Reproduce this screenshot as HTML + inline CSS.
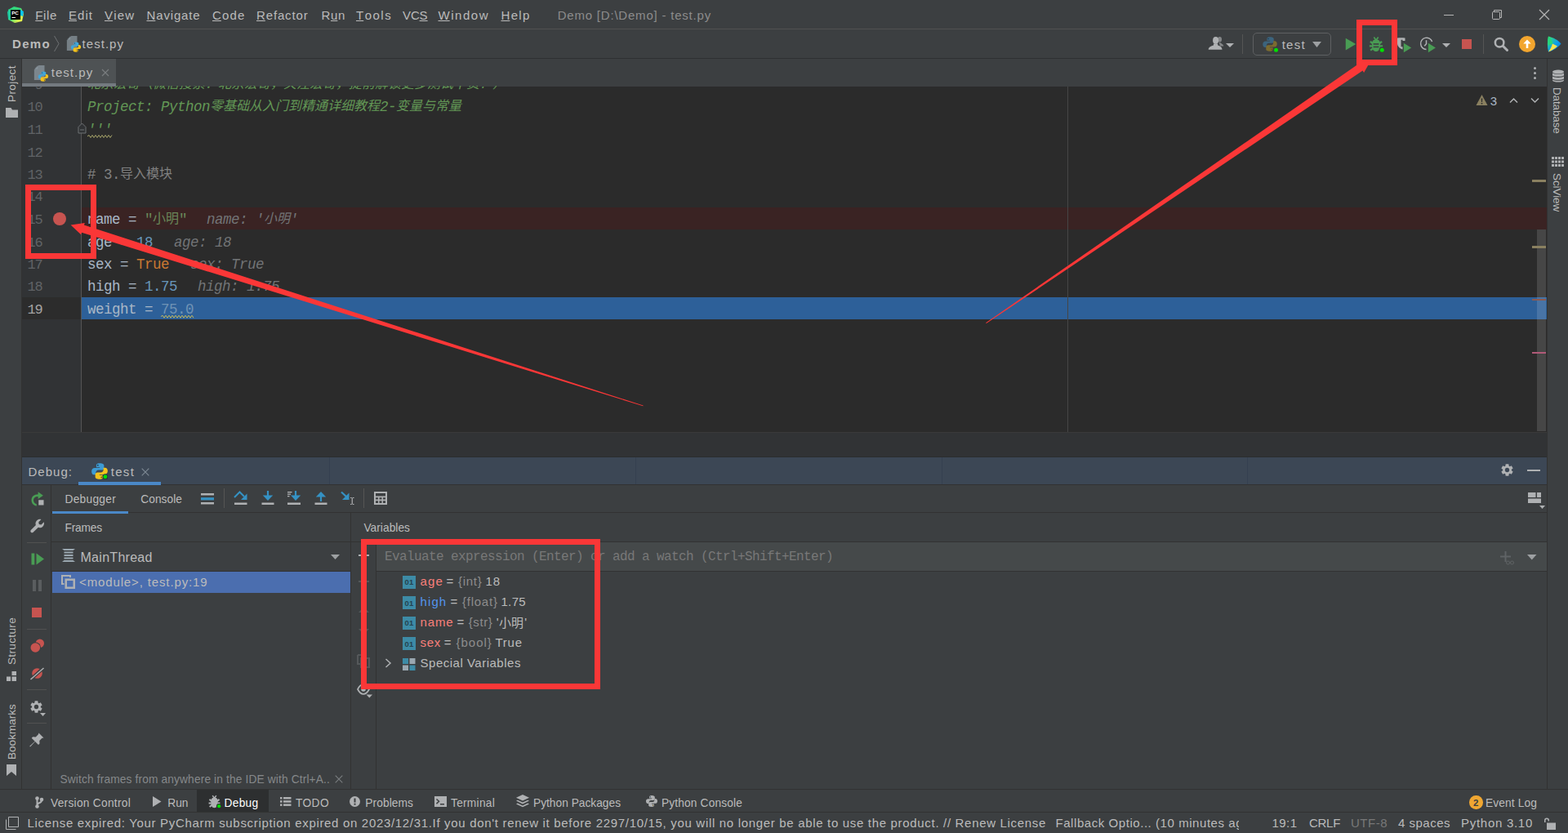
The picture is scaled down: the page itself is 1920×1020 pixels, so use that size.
<!DOCTYPE html>
<html><head><meta charset="utf-8"><title>Demo - test.py</title><style>html,body{margin:0;padding:0}
body{width:1920px;height:1020px;overflow:hidden;background:#3c3f41;position:relative;font-family:"Liberation Sans",sans-serif}
div,span,svg{position:absolute;display:block}
span{white-space:pre}
u{text-decoration:underline;text-underline-offset:1px;text-decoration-thickness:1px}
</style></head><body>
<div style="left:0px;top:35px;width:1920px;height:1px;background:#515151;"></div>
<svg style="left:9px;top:8px;" width="20" height="20" viewBox="0 0 20 20"><defs><linearGradient id="pcg" x1="0" y1="0" x2="1" y2="1"><stop offset="0" stop-color="#21D789"/><stop offset=".45" stop-color="#3FD873"/><stop offset=".75" stop-color="#D4EE4F"/><stop offset="1" stop-color="#FCF84A"/></linearGradient></defs><path d="M1 4L8 0l9 2 3 7-2 9-9 2-8-4z" fill="url(#pcg)"/><path d="M14 3l6 3-1 6-5-2z" fill="#07C3F2"/><path d="M0 7l2-4 3 14-4-2z" fill="#1FC9A0"/><rect x="4" y="4" width="12" height="12" fill="#000"/><rect x="5.5" y="13" width="4.5" height="1" fill="#fff"/><text x="5.2" y="10.3" font-family="Liberation Sans,sans-serif" font-weight="700" font-size="6.2" fill="#fff">PC</text></svg>
<span style="left:43.30px;top:9px;font-size:15px;line-height:20px;color:#bbbbbb;letter-spacing:0.582px;"><u style="letter-spacing:0;margin-right:0.582px">F</u>ile</span>
<span style="left:84.00px;top:9px;font-size:15px;line-height:20px;color:#bbbbbb;letter-spacing:1.035px;"><u style="letter-spacing:0;margin-right:1.035px">E</u>dit</span>
<span style="left:128.00px;top:9px;font-size:15px;line-height:20px;color:#bbbbbb;letter-spacing:1.188px;"><u style="letter-spacing:0;margin-right:1.188px">V</u>iew</span>
<span style="left:179.50px;top:9px;font-size:15px;line-height:20px;color:#bbbbbb;letter-spacing:0.850px;"><u style="letter-spacing:0;margin-right:0.850px">N</u>avigate</span>
<span style="left:260.00px;top:9px;font-size:15px;line-height:20px;color:#bbbbbb;letter-spacing:1.160px;"><u style="letter-spacing:0;margin-right:1.160px">C</u>ode</span>
<span style="left:314.00px;top:9px;font-size:15px;line-height:20px;color:#bbbbbb;letter-spacing:0.850px;"><u style="letter-spacing:0;margin-right:0.850px">R</u>efactor</span>
<span style="left:393.50px;top:9px;font-size:15px;line-height:20px;color:#bbbbbb;letter-spacing:0.656px;">R<u style="letter-spacing:0;margin-right:0.656px">u</u>n</span>
<span style="left:436.00px;top:9px;font-size:15px;line-height:20px;color:#bbbbbb;letter-spacing:1.494px;"><u style="letter-spacing:0;margin-right:1.494px">T</u>ools</span>
<span style="left:493.00px;top:9px;font-size:15px;line-height:20px;color:#bbbbbb;letter-spacing:-0.115px;">VC<u style="letter-spacing:0;margin-right:-0.115px">S</u></span>
<span style="left:536.50px;top:9px;font-size:15px;line-height:20px;color:#bbbbbb;letter-spacing:1.523px;"><u style="letter-spacing:0;margin-right:1.523px">W</u>indow</span>
<span style="left:613.50px;top:9px;font-size:15px;line-height:20px;color:#bbbbbb;letter-spacing:1.335px;"><u style="letter-spacing:0;margin-right:1.335px">H</u>elp</span>
<span style="left:682.70px;top:9px;font-size:15px;line-height:20px;color:#8c8c8c;letter-spacing:0.795px;">Demo [D:\Demo] - test.py</span>
<div style="left:1768px;top:18px;width:12px;height:1px;background:#b5b5b5;"></div>
<svg style="left:1826px;top:11px;" width="14" height="14" viewBox="0 0 14 14"><path d="M3.5 3.5v-2h9v9h-2" fill="none" stroke="#b5b5b5"/><rect x="1.5" y="3.5" width="9" height="9" fill="none" stroke="#b5b5b5" rx="1"/></svg>
<svg style="left:1884px;top:11px;" width="14" height="14" viewBox="0 0 14 14"><path d="M1 1l12 12M13 1L1 13" stroke="#b5b5b5" stroke-width="1.2"/></svg>
<div style="left:0px;top:71px;width:1920px;height:1px;background:#2e3032;"></div>
<span style="left:15.00px;top:44px;font-size:15px;line-height:20px;color:#bbbbbb;font-weight:700;letter-spacing:1.328px;">Demo</span>
<svg style="left:65px;top:43px;" width="9" height="21" viewBox="0 0 9 21"><path d="M1.5 1L7 10.5 1.5 20" fill="none" stroke="#6e7173" stroke-width="1"/></svg>
<svg style="left:80px;top:44px" width="20" height="20" viewBox="0 0 16 16"><path d="M5.8 0H11.6V14.4H1.5V4.3z" fill="#9AA7B0" opacity=".62"/><path d="M5 0L1.5 3.5H5z" fill="#9AA7B0" opacity=".45"/><g transform="translate(4.8,5.3) scale(.7)"><path d="M7.9 1C5.5 1 5.1 2 5.1 3v1.6h3v.6H3.6C2.3 5.2 1 6.1 1 8.1s1 3 2.3 3h1.4V9.3c0-1.3 1-2.3 2.3-2.3h2.9c1 0 1.9-.8 1.9-1.9V3c0-1-.9-2-3.9-2z" fill="#40A6DA"/><circle cx="6.4" cy="2.8" r=".65" fill="#1d3a52"/><path d="M8.1 15c2.4 0 2.8-1 2.8-2v-1.6h-3v-.6h4.5c1.3 0 2.6-.9 2.6-2.9s-1-3-2.3-3h-1.4v1.8c0 1.3-1 2.3-2.3 2.3H6.1c-1 0-1.9.8-1.9 1.9V13c0 1 .9 2 3.9 2z" fill="#F4C21C"/><circle cx="9.6" cy="13.2" r=".65" fill="#6b5310"/></g></svg>
<span style="left:100.60px;top:44px;font-size:15px;line-height:20px;color:#bbbbbb;letter-spacing:1.030px;">test.py</span>
<svg style="left:1478px;top:44px;" width="22" height="20" viewBox="0 0 22 20"><g fill="#AFB1B3"><g opacity=".62"><ellipse cx="15.5" cy="4.2" rx="2.5" ry="3.2"/><path d="M14.5 7.5C17 9 20.3 10 20.3 12.6H16z"/></g><ellipse cx="10.6" cy="5.5" rx="3.5" ry="4.4"/><path d="M1.7 16.8C1.7 13.5 5 12.3 8 11.4V9.5H13.2V11.4C16 12.3 18.5 13.5 18.5 16.8z"/></g></svg>
<svg style="left:1501px;top:53px;" width="10" height="5" viewBox="0 0 10 5"><path d="M0 0h10l-5 5z" fill="#AFB1B3"/></svg>
<div style="left:1521px;top:42px;width:1px;height:24px;background:#555555;"></div>
<div style="left:1534px;top:40px;width:94px;height:26px;border:1px solid #5e6062;border-radius:5px"></div>
<svg style="left:1545px;top:44px" width="20" height="20" viewBox="0 0 16 16"><path d="M7.9 1C5.5 1 5.1 2 5.1 3v1.6h3v.6H3.6C2.3 5.2 1 6.1 1 8.1s1 3 2.3 3h1.4V9.3c0-1.3 1-2.3 2.3-2.3h2.9c1 0 1.9-.8 1.9-1.9V3c0-1-.9-2-3.9-2z" fill="#3C647D"/><circle cx="6.4" cy="2.8" r=".65" fill="#1d3a52"/><path d="M8.1 15c2.4 0 2.8-1 2.8-2v-1.6h-3v-.6h4.5c1.3 0 2.6-.9 2.6-2.9s-1-3-2.3-3h-1.4v1.8c0 1.3-1 2.3-2.3 2.3H6.1c-1 0-1.9.8-1.9 1.9V13c0 1 .9 2 3.9 2z" fill="#7B6B2F"/><circle cx="9.6" cy="13.2" r=".65" fill="#6b5310"/><circle cx="14" cy="13.8" r="3" fill="#3c3f41"/><circle cx="14" cy="13.8" r="2" fill="#00E000"/></svg>
<span style="left:1569.70px;top:45px;font-size:15px;line-height:20px;color:#bbbbbb;letter-spacing:1.228px;">test</span>
<svg style="left:1607px;top:51px;" width="11" height="7" viewBox="0 0 11 7"><path d="M0 0h11l-5.5 7z" fill="#9da0a2"/></svg>
<svg style="left:1644px;top:44px" width="20" height="20" viewBox="0 0 16 16"><path d="M3 2.1L13 8 3 13.9z" fill="#499C54"/></svg>
<svg style="left:1675.3px;top:44px" width="20" height="20" viewBox="0 0 16 16"><g fill="#499C54"><path d="M8 3.4c2.6 0 4 1.7 4 4.3v2.5c0 2.8-1.6 5-4 5s-4-2.2-4-5V7.7c0-2.6 1.4-4.3 4-4.3z"/><path d="M5.3 1.5l1.1-.8L8 2.9 9.6.7l1.1.8-1.9 2.7H7.2z"/></g><g stroke="#499C54" stroke-width="1.9" fill="none"><path d="M4.8 7.4L2.3 5.5M11.2 7.4l2.5-1.9M4.2 9.9H1.5M11.8 9.9h2.7M4.8 12.3l-2.3 1.8M11.2 12.3l2.3 1.8"/></g><g fill="#3c3f41"><rect x="5.3" y="7.3" width="5.4" height="1.3"/><rect x="5.3" y="10.1" width="5.4" height="1.3"/></g><circle cx="13.85" cy="13.85" r="3" fill="#3c3f41"/><circle cx="13.85" cy="13.85" r="2" fill="#00E000"/></svg>
<svg style="left:1710px;top:45px;" width="20" height="20" viewBox="0 0 20 20"><path d="M1 1.5c3.5-.5 6-.5 9.5 0V5H7.5V3.8H5.5v8.4h2v3.3C3.5 14 1 11.5 1 8z" fill="#AFB1B3"/><path d="M8.8 7.8l9.4 5.7-9.4 5.7z" fill="#499C54"/></svg>
<svg style="left:1738px;top:45px;" width="20" height="20" viewBox="0 0 20 20"><path d="M15.6 6A7.2 7.2 0 1 0 8.5 15.6" fill="none" stroke="#AFB1B3" stroke-width="1.5"/><path d="M8.5 4.2v4.5l-2.3 2.5" fill="none" stroke="#AFB1B3" stroke-width="1.5"/><path d="M10.9 7.8l9 5.7-9 5.7z" fill="#499C54"/></svg>
<svg style="left:1766px;top:53px;" width="10" height="5" viewBox="0 0 10 5"><path d="M0 0h10l-5 5z" fill="#AFB1B3"/></svg>
<div style="left:1790px;top:48px;width:12px;height:12px;background:#C75450;"></div>
<div style="left:1816px;top:42px;width:1px;height:24px;background:#555555;"></div>
<svg style="left:1828px;top:44px" width="20" height="20" viewBox="0 0 16 16"><circle cx="6.5" cy="6.5" r="4.2" fill="none" stroke="#AFB1B3" stroke-width="2"/><path d="M9.8 9.8L14 14" stroke="#AFB1B3" stroke-width="2.4" stroke-linecap="round"/></svg>
<svg style="left:1860px;top:44px;" width="20" height="20" viewBox="0 0 20 20"><circle cx="10" cy="10" r="10" fill="#F2A52E"/><path d="M10 4.5L5.3 9.5h3.4V15h2.6V9.5h3.4z" fill="#fff"/></svg>
<svg style="left:1893px;top:43px;" width="20" height="22" viewBox="0 0 20 22"><defs><linearGradient id="cwm" x1="0" y1="0" x2="1" y2="1"><stop offset="0" stop-color="#3BEA62"/><stop offset=".55" stop-color="#0E9EEA"/><stop offset="1" stop-color="#0870D8"/></linearGradient></defs><path d="M3 1.5C9 3 15 6 18.5 10.5 15 15 9 19 3 20.5 1.5 14 1.5 8 3 1.5z" fill="url(#cwm)"/><path d="M3 20.5c4-1.5 8-4 11-7l-6-3c-1 4-3 7-5 10z" fill="#F9E34B"/><path d="M3 1.5c3 3 5 6 5.5 9l-6 2c-.5-4-.3-8 .5-11z" fill="#27D57A"/></svg>
<div style="left:26px;top:72px;width:1px;height:895px;background:#323232;"></div>
<div style="left:1894px;top:72px;width:1px;height:895px;background:#323232;"></div>
<span style="left:-0.50px;top:-14px;font-size:13.5px;line-height:20px;color:#bbbbbb;letter-spacing:0.410px;left:5px;top:124.5px;transform-origin:0 0;transform:rotate(-90deg);">Project</span>
<svg style="left:7px;top:132px;" width="15" height="12" viewBox="0 0 15 12"><path d="M0 0h6.5l1.5 2.5H15V12H0z" fill="#AFB1B3"/></svg>
<span style="left:-0.50px;top:-14px;font-size:13.5px;line-height:20px;color:#bbbbbb;letter-spacing:0.369px;left:5px;top:814px;transform-origin:0 0;transform:rotate(-90deg);">Structure</span>
<svg style="left:8px;top:822px;" width="12" height="12" viewBox="0 0 12 12"><g fill="#AFB1B3"><rect x="6.5" y="0" width="5.5" height="5"/><rect x="0" y="6.5" width="5" height="5.5"/><rect x="6.5" y="6.5" width="5.5" height="5.5"/></g></svg>
<span style="left:-0.50px;top:-14px;font-size:13.5px;line-height:20px;color:#bbbbbb;letter-spacing:0.041px;left:5px;top:929.5px;transform-origin:0 0;transform:rotate(-90deg);">Bookmarks</span>
<svg style="left:8px;top:936px;" width="12" height="14" viewBox="0 0 12 14"><path d="M0 0h12v14l-6-5-6 5z" fill="#AFB1B3"/></svg>
<svg style="left:1900px;top:85px;" width="16" height="16" viewBox="0 0 16 16"><g fill="#AFB1B3"><ellipse cx="8" cy="3" rx="7" ry="2.6"/><path d="M1 4.6c1.5 1.8 12.5 1.8 14 0v2.8c-1.5 1.8-12.5 1.8-14 0zM1 8.6c1.5 1.8 12.5 1.8 14 0v2.8c-1.5 1.8-12.5 1.8-14 0zM1 12.4c1.5 1.8 12.5 1.8 14 0v.8c0 3.2-14 3.2-14 0z"/></g></svg>
<span style="left:-0.50px;top:-14px;font-size:13.5px;line-height:20px;color:#bbbbbb;letter-spacing:-0.150px;left:1915.5px;top:106.5px;transform-origin:0 0;transform:rotate(90deg);">Database</span>
<svg style="left:1900px;top:192px;" width="15" height="12" viewBox="0 0 15 12"><g fill="#AFB1B3"><rect x="0" y="0" width="3" height="3"/><rect x="4" y="0" width="3" height="3"/><rect x="8" y="0" width="3" height="3"/><rect x="12" y="0" width="3" height="3"/><rect x="0" y="4.5" width="3" height="3"/><rect x="4" y="4.5" width="3" height="3"/><rect x="8" y="4.5" width="3" height="3"/><rect x="12" y="4.5" width="3" height="3"/><rect x="0" y="9" width="3" height="3"/><rect x="4" y="9" width="3" height="3"/><rect x="8" y="9" width="3" height="3"/><rect x="12" y="9" width="3" height="3"/></g></svg>
<span style="left:-0.50px;top:-14px;font-size:13.5px;line-height:20px;color:#bbbbbb;letter-spacing:-0.083px;left:1915.5px;top:211.5px;transform-origin:0 0;transform:rotate(90deg);">SciView</span>
<div style="left:27px;top:106px;width:1867px;height:423px;background:#2b2b2b;"></div>
<div style="left:27px;top:106px;width:72px;height:423px;background:#313335;"></div>
<div style="left:100px;top:254px;width:1794px;height:27px;background:#3a2323;"></div>
<div style="left:100px;top:364px;width:1794px;height:27px;background:#2d6099;"></div>
<div style="left:27px;top:364px;width:72px;height:27px;background:#2c2c2c;"></div>
<div style="left:99px;top:106px;width:1px;height:423px;background:#555555;"></div>
<div style="left:1307px;top:106px;width:1px;height:423px;background:#464646;"></div>
<div style="left:27px;top:529px;width:1867px;height:1px;background:#3a3a3a;"></div>
<div style="left:27px;top:530px;width:1867px;height:30px;background:#313335;"></div>
<div style="left:27px;top:559px;width:1867px;height:1px;background:#2b2d2e;"></div>
<span style="left:42.50px;top:95px;font-size:17px;line-height:20px;color:#606366;font-family:'Liberation Mono', monospace;letter-spacing:-1.200px;">9</span>
<span style="left:33.50px;top:122px;font-size:17px;line-height:20px;color:#606366;font-family:'Liberation Mono', monospace;letter-spacing:-1.200px;">10</span>
<span style="left:33.50px;top:150px;font-size:17px;line-height:20px;color:#606366;font-family:'Liberation Mono', monospace;letter-spacing:-1.200px;">11</span>
<span style="left:33.50px;top:178px;font-size:17px;line-height:20px;color:#606366;font-family:'Liberation Mono', monospace;letter-spacing:-1.200px;">12</span>
<span style="left:33.50px;top:205px;font-size:17px;line-height:20px;color:#606366;font-family:'Liberation Mono', monospace;letter-spacing:-1.200px;">13</span>
<span style="left:33.50px;top:232px;font-size:17px;line-height:20px;color:#606366;font-family:'Liberation Mono', monospace;letter-spacing:-1.200px;">14</span>
<span style="left:33.50px;top:260px;font-size:17px;line-height:20px;color:#606366;font-family:'Liberation Mono', monospace;letter-spacing:-1.200px;">15</span>
<span style="left:33.50px;top:288px;font-size:17px;line-height:20px;color:#606366;font-family:'Liberation Mono', monospace;letter-spacing:-1.200px;">16</span>
<span style="left:33.50px;top:315px;font-size:17px;line-height:20px;color:#606366;font-family:'Liberation Mono', monospace;letter-spacing:-1.200px;">17</span>
<span style="left:33.50px;top:342px;font-size:17px;line-height:20px;color:#606366;font-family:'Liberation Mono', monospace;letter-spacing:-1.200px;">18</span>
<span style="left:33.50px;top:370px;font-size:17px;line-height:20px;color:#a4a3a3;font-family:'Liberation Mono', monospace;letter-spacing:-1.200px;">19</span>
<svg style="left:101px;top:88px" width="524" height="26" viewBox="-6 -20 524 26"><text x="0" y="0" font-size="16" font-style="italic" fill="#629755" font-family="'Liberation Mono', 'Noto Sans CJK SC', monospace">北京宏哥（微信搜索：北京宏哥，关注宏哥，提前解锁更多测试干货！）</text></svg>
<span style="left:107.00px;top:119px;font-size:17.5px;line-height:24px;color:#629755;font-family:'Liberation Mono', monospace;font-style:italic;letter-spacing:-0.500px;">Project: Python</span>
<svg style="left:251px;top:115px" width="220" height="26" viewBox="-6 -20 220 26"><text x="0" y="0" font-size="16" font-style="italic" fill="#629755" font-family="'Liberation Mono', 'Noto Sans CJK SC', monospace">零基础从入门到精通详细教程</text></svg>
<span style="left:465.00px;top:119px;font-size:17.5px;line-height:24px;color:#629755;font-family:'Liberation Mono', monospace;font-style:italic;letter-spacing:-0.500px;">2-</span>
<svg style="left:479px;top:115px" width="92" height="26" viewBox="-6 -20 92 26"><text x="0" y="0" font-size="16" font-style="italic" fill="#629755" font-family="'Liberation Mono', 'Noto Sans CJK SC', monospace">变量与常量</text></svg>
<span style="left:107.00px;top:147px;font-size:17.5px;line-height:24px;color:#629755;font-family:'Liberation Mono', monospace;font-style:italic;letter-spacing:-0.500px;">'''</span>
<svg style="left:0;top:0" width="1920" height="1020"><path d="M107 167.0L109 165.5L111 168.5L113 165.5L115 168.5L117 165.5L119 168.5L121 165.5L123 168.5L125 165.5L127 168.5L129 165.5L131 168.5L133 165.5L135 168.5L137 165.5" fill="none" stroke="#a8a56a" stroke-width="1"/></svg>
<svg style="left:94.5px;top:149.5px;" width="11" height="14" viewBox="0 0 11 14"><path d="M1 5.5L5.5 1 10 5.5V13H1z" fill="#313335" stroke="#6f7275" stroke-width="1"/><path d="M3 9h5" stroke="#6f7275"/></svg>
<span style="left:107.00px;top:202px;font-size:17.5px;line-height:24px;color:#808080;font-family:'Liberation Mono', monospace;letter-spacing:-0.500px;"># 3.</span>
<svg style="left:141px;top:198px" width="76" height="26" viewBox="-6 -20 76 26"><text x="0" y="0" font-size="16" fill="#808080" font-family="'Liberation Mono', 'Noto Sans CJK SC', monospace">导入模块</text></svg>
<span style="left:107.00px;top:257px;font-size:17.5px;line-height:24px;color:#a9b7c6;font-family:'Liberation Mono', monospace;letter-spacing:-0.500px;">name = </span>
<span style="left:177.00px;top:257px;font-size:17.5px;line-height:24px;color:#6a8759;font-family:'Liberation Mono', monospace;letter-spacing:-0.500px;">"</span>
<svg style="left:181px;top:253px" width="44" height="26" viewBox="-6 -20 44 26"><text x="0" y="0" font-size="16" fill="#6a8759" font-family="'Liberation Mono', 'Noto Sans CJK SC', monospace">小明</text></svg>
<span style="left:219.00px;top:257px;font-size:17.5px;line-height:24px;color:#6a8759;font-family:'Liberation Mono', monospace;letter-spacing:-0.500px;">"</span>
<span style="left:253.00px;top:257px;font-size:17.5px;line-height:24px;color:#727476;font-family:'Liberation Mono', monospace;font-style:italic;letter-spacing:-0.500px;">name: '</span>
<svg style="left:317px;top:253px" width="44" height="26" viewBox="-6 -20 44 26"><text x="0" y="0" font-size="16" font-style="italic" fill="#727476" font-family="'Liberation Mono', 'Noto Sans CJK SC', monospace">小明</text></svg>
<span style="left:355.00px;top:257px;font-size:17.5px;line-height:24px;color:#727476;font-family:'Liberation Mono', monospace;font-style:italic;letter-spacing:-0.500px;">'</span>
<span style="left:107.00px;top:285px;font-size:17.5px;line-height:24px;color:#a9b7c6;font-family:'Liberation Mono', monospace;letter-spacing:-0.500px;">age = </span>
<span style="left:167.00px;top:285px;font-size:17.5px;line-height:24px;color:#6897bb;font-family:'Liberation Mono', monospace;letter-spacing:-0.500px;">18</span>
<span style="left:213.00px;top:285px;font-size:17.5px;line-height:24px;color:#727476;font-family:'Liberation Mono', monospace;font-style:italic;letter-spacing:-0.500px;">age: 18</span>
<span style="left:107.00px;top:312px;font-size:17.5px;line-height:24px;color:#a9b7c6;font-family:'Liberation Mono', monospace;letter-spacing:-0.500px;">sex = </span>
<span style="left:167.00px;top:312px;font-size:17.5px;line-height:24px;color:#cc7832;font-family:'Liberation Mono', monospace;letter-spacing:-0.500px;">True</span>
<span style="left:233.00px;top:312px;font-size:17.5px;line-height:24px;color:#727476;font-family:'Liberation Mono', monospace;font-style:italic;letter-spacing:-0.500px;">sex: True</span>
<span style="left:107.00px;top:339px;font-size:17.5px;line-height:24px;color:#a9b7c6;font-family:'Liberation Mono', monospace;letter-spacing:-0.500px;">high = </span>
<span style="left:177.00px;top:339px;font-size:17.5px;line-height:24px;color:#6897bb;font-family:'Liberation Mono', monospace;letter-spacing:-0.500px;">1.75</span>
<span style="left:242.00px;top:339px;font-size:17.5px;line-height:24px;color:#727476;font-family:'Liberation Mono', monospace;font-style:italic;letter-spacing:-0.500px;">high: 1.75</span>
<span style="left:107.00px;top:367px;font-size:17.5px;line-height:24px;color:#a9b7c6;font-family:'Liberation Mono', monospace;letter-spacing:-0.500px;">weight = </span>
<span style="left:197.00px;top:367px;font-size:17.5px;line-height:24px;color:#6f93b5;font-family:'Liberation Mono', monospace;letter-spacing:-0.500px;">75.0</span>
<svg style="left:0;top:0" width="1920" height="1020"><path d="M197 387.7L199 386.2L201 389.2L203 386.2L205 389.2L207 386.2L209 389.2L211 386.2L213 389.2L215 386.2L217 389.2L219 386.2L221 389.2L223 386.2L225 389.2L227 386.2L229 389.2L231 386.2L233 389.2L235 386.2L237 389.2" fill="none" stroke="#c2b85e" stroke-width="1"/></svg>
<div style="left:64.6px;top:259.6px;width:16.2px;height:16.2px;border-radius:50%;background:#c75450"></div>
<svg style="left:1807px;top:115px;" width="15" height="15" viewBox="0 0 15 15"><path d="M7.5 1L14.5 14H.5z" fill="#8a8060"/><path d="M6.7 5.5h1.6l-.3 4.5h-1zM6.7 11h1.6v1.6H6.7z" fill="#2b2b2b"/></svg>
<span style="left:1824.70px;top:114px;font-size:15px;line-height:20px;color:#a9b7c6;letter-spacing:0.956px;">3</span>
<svg style="left:1848px;top:119px;" width="11" height="8" viewBox="0 0 11 8"><path d="M1 6.5L5.5 2 10 6.5" fill="none" stroke="#AFB1B3" stroke-width="1.5"/></svg>
<svg style="left:1874px;top:119px;" width="11" height="8" viewBox="0 0 11 8"><path d="M1 1.5L5.5 6 10 1.5" fill="none" stroke="#AFB1B3" stroke-width="1.5"/></svg>
<div style="left:1882px;top:281px;width:11px;height:247px;background:rgba(255,255,255,.13);"></div>
<div style="left:1876px;top:220px;width:17px;height:3px;background:#8a8060;"></div>
<div style="left:1876px;top:301px;width:17px;height:3px;background:#8a8060;"></div>
<div style="left:1876px;top:366px;width:17px;height:2px;background:#8c5a50;"></div>
<div style="left:1876px;top:431px;width:17px;height:2px;background:#b05a78;"></div>
<div style="left:27px;top:72px;width:1867px;height:33px;background:#3c3f41;"></div>
<div style="left:27px;top:72px;width:115px;height:30px;background:#4e5254;"></div>
<div style="left:27px;top:102px;width:115px;height:4px;background:#747a80;"></div>
<svg style="left:40px;top:80px" width="20" height="20" viewBox="0 0 16 16"><path d="M5.8 0H11.6V14.4H1.5V4.3z" fill="#9AA7B0" opacity=".62"/><path d="M5 0L1.5 3.5H5z" fill="#9AA7B0" opacity=".45"/><g transform="translate(4.8,5.3) scale(.7)"><path d="M7.9 1C5.5 1 5.1 2 5.1 3v1.6h3v.6H3.6C2.3 5.2 1 6.1 1 8.1s1 3 2.3 3h1.4V9.3c0-1.3 1-2.3 2.3-2.3h2.9c1 0 1.9-.8 1.9-1.9V3c0-1-.9-2-3.9-2z" fill="#40A6DA"/><circle cx="6.4" cy="2.8" r=".65" fill="#1d3a52"/><path d="M8.1 15c2.4 0 2.8-1 2.8-2v-1.6h-3v-.6h4.5c1.3 0 2.6-.9 2.6-2.9s-1-3-2.3-3h-1.4v1.8c0 1.3-1 2.3-2.3 2.3H6.1c-1 0-1.9.8-1.9 1.9V13c0 1 .9 2 3.9 2z" fill="#F4C21C"/><circle cx="9.6" cy="13.2" r=".65" fill="#6b5310"/></g></svg>
<span style="left:62.70px;top:79px;font-size:15px;line-height:20px;color:#bbbbbb;letter-spacing:1.045px;">test.py</span>
<svg style="left:124px;top:84px;" width="10" height="10" viewBox="0 0 10 10"><path d="M1 1l8 8M9 1L1 9" stroke="#7a7e80" stroke-width="1.1"/></svg>
<div style="left:1877.5px;top:82.0px;width:3px;height:3px;border-radius:50%;background:#AFB1B3"></div>
<div style="left:1877.5px;top:87.8px;width:3px;height:3px;border-radius:50%;background:#AFB1B3"></div>
<div style="left:1877.5px;top:93.5px;width:3px;height:3px;border-radius:50%;background:#AFB1B3"></div>
<div style="left:27px;top:560px;width:1867px;height:33px;background:#3c4755;"></div>
<div style="left:403px;top:560px;width:1px;height:33px;background:#354050;"></div>
<div style="left:778px;top:560px;width:1px;height:33px;background:#354050;"></div>
<div style="left:1153px;top:560px;width:1px;height:33px;background:#354050;"></div>
<div style="left:1527px;top:560px;width:1px;height:33px;background:#354050;"></div>
<div style="left:27px;top:593px;width:1867px;height:1px;background:#323232;"></div>
<span style="left:34.50px;top:568px;font-size:15px;line-height:20px;color:#bbbbbb;letter-spacing:1.004px;">Debug:</span>
<svg style="left:112px;top:567px" width="20" height="20" viewBox="0.9 0.9 14.2 14.2"><path d="M7.9 1C5.5 1 5.1 2 5.1 3v1.6h3v.6H3.6C2.3 5.2 1 6.1 1 8.1s1 3 2.3 3h1.4V9.3c0-1.3 1-2.3 2.3-2.3h2.9c1 0 1.9-.8 1.9-1.9V3c0-1-.9-2-3.9-2z" fill="#3E9BD3"/><circle cx="6.4" cy="2.8" r=".65" fill="#1d3a52"/><path d="M8.1 15c2.4 0 2.8-1 2.8-2v-1.6h-3v-.6h4.5c1.3 0 2.6-.9 2.6-2.9s-1-3-2.3-3h-1.4v1.8c0 1.3-1 2.3-2.3 2.3H6.1c-1 0-1.9.8-1.9 1.9V13c0 1 .9 2 3.9 2z" fill="#F4C21C"/><circle cx="9.6" cy="13.2" r=".65" fill="#6b5310"/><circle cx="12.9" cy="12.8" r="2.5" fill="#2b3440"/><circle cx="12.9" cy="12.8" r="1.75" fill="#00E000"/></svg>
<span style="left:135.75px;top:568px;font-size:15px;line-height:20px;color:#bbbbbb;letter-spacing:1.291px;">test</span>
<svg style="left:173px;top:573px;" width="10" height="10" viewBox="0 0 10 10"><path d="M.7 .7l8.6 8.6M9.3 .7L.7 9.3" stroke="#7f8b96" stroke-width="1.1"/></svg>
<div style="left:96px;top:590px;width:101px;height:4px;background:#4a88c7;"></div>
<svg style="left:1837px;top:567px;" width="17" height="17" viewBox="0 0 16 16"><path d="M6.01 3.30L6.27 1.22L9.73 1.22L9.99 3.30L11.08 3.93L13.01 3.11L14.74 6.11L13.06 7.37L13.06 8.63L14.74 9.89L13.01 12.89L11.08 12.07L9.99 12.70L9.73 14.78L6.27 14.78L6.01 12.70L4.92 12.07L2.99 12.89L1.26 9.89L2.94 8.63L2.94 7.37L1.26 6.11L2.99 3.11L4.92 3.93ZM8 5.5a2.5 2.5 0 1 0 0 5 2.5 2.5 0 0 0 0-5z" fill="#AFB1B3" fill-rule="evenodd"/></svg>
<div style="left:1870px;top:575px;width:16px;height:2px;background:#AFB1B3;"></div>
<div style="left:62px;top:594px;width:1px;height:373px;background:#323232;"></div>
<svg style="left:36px;top:601px" width="20" height="20" viewBox="0 0 16 16"><path d="M8.5 1l5 3.5-5 3.5V5.5C5.5 5.5 4 7 4 9.2c0 1.8 1.2 3.3 3 3.7v2C4 14.4 2 12 2 9.2 2 5.8 4.5 3.5 8.5 3.4z" fill="#499C54"/><rect x="9" y="9" width="5" height="5" fill="#AFB1B3"/></svg>
<svg style="left:36px;top:634px" width="20" height="20" viewBox="0 0 16 16"><path d="M14.2 4.2l-2.6 2.6-2.2-.4-.4-2.2 2.6-2.6c-1.6-.5-3.3-.1-4.4 1.1-1.2 1.2-1.5 2.9-.9 4.4L1.5 12c-.6.6-.6 1.6 0 2.2.6.6 1.6.6 2.2 0l5-4.8c1.5.6 3.2.3 4.4-.9 1.2-1.1 1.6-2.8 1.1-4.3z" fill="#AFB1B3"/></svg>
<div style="left:33px;top:664px;width:24px;height:1px;background:#515151;"></div>
<svg style="left:38px;top:677px;" width="17" height="15" viewBox="0 0 17 15"><rect x="0.5" y="0.5" width="3.8" height="14" fill="#499C54"/><path d="M6.5 0.5L16 7.5 6.5 14.5z" fill="#499C54"/></svg>
<div style="left:40px;top:710px;width:4px;height:14px;background:#5a5d5f;"></div>
<div style="left:46.5px;top:710px;width:4px;height:14px;background:#5a5d5f;"></div>
<div style="left:39px;top:744px;width:12px;height:12px;background:#c75450;"></div>
<div style="left:33px;top:770px;width:24px;height:1px;background:#515151;"></div>
<svg style="left:37px;top:782px;" width="18" height="18" viewBox="0 0 18 18"><circle cx="11.8" cy="5.8" r="5.2" fill="#c75450"/><circle cx="6.3" cy="11" r="6.8" fill="#3c3f41"/><circle cx="6.3" cy="11" r="5.8" fill="#c75450"/></svg>
<svg style="left:36px;top:815px;" width="19" height="19" viewBox="0 0 19 19"><circle cx="9.5" cy="9.5" r="6.3" fill="#c75450"/><path d="M1 17.5L17.5 2.5" stroke="#3c3f41" stroke-width="4"/><path d="M1.5 17L17.5 3" stroke="#AFB1B3" stroke-width="1.5"/></svg>
<div style="left:33px;top:844px;width:24px;height:1px;background:#515151;"></div>
<svg style="left:36px;top:856.5px;" width="17" height="17" viewBox="0 0 16 16"><path d="M6.01 3.30L6.27 1.22L9.73 1.22L9.99 3.30L11.08 3.93L13.01 3.11L14.74 6.11L13.06 7.37L13.06 8.63L14.74 9.89L13.01 12.89L11.08 12.07L9.99 12.70L9.73 14.78L6.27 14.78L6.01 12.70L4.92 12.07L2.99 12.89L1.26 9.89L2.94 8.63L2.94 7.37L1.26 6.11L2.99 3.11L4.92 3.93ZM8 5.5a2.5 2.5 0 1 0 0 5 2.5 2.5 0 0 0 0-5z" fill="#AFB1B3" fill-rule="evenodd"/></svg>
<svg style="left:49px;top:873px;" width="7" height="4" viewBox="0 0 7 4"><path d="M0 0h7l-3.5 4z" fill="#AFB1B3"/></svg>
<div style="left:33px;top:885px;width:24px;height:1px;background:#515151;"></div>
<svg style="left:35px;top:896px;" width="20" height="20" viewBox="0 0 20 20"><path d="M12.5 1.5l6 6-2 .3-3.2 3.2.2 3.5-1.5 1.5-4-4-6 6.5-.8-.8 6.5-6-4-4 1.5-1.5 3.5.2 3.2-3.2z" fill="#AFB1B3"/></svg>
<div style="left:63px;top:627px;width:1831px;height:1px;background:#323232;"></div>
<span style="left:79.50px;top:602px;font-size:13.75px;line-height:20px;color:#bbbbbb;letter-spacing:0.262px;">Debugger</span>
<span style="left:172.25px;top:602px;font-size:13.75px;line-height:20px;color:#bbbbbb;letter-spacing:0.042px;">Console</span>
<div style="left:64px;top:626px;width:93px;height:3px;background:#4a88c7;"></div>
<svg style="left:246px;top:603px;" width="16" height="15" viewBox="0 0 16 15"><rect x="0" y="1" width="16" height="2.5" fill="#AFB1B3"/><rect x="0" y="6.2" width="16" height="3.2" fill="#3592C4"/><rect x="0" y="12" width="16" height="2.5" fill="#AFB1B3"/></svg>
<div style="left:274px;top:598px;width:1px;height:24px;background:#555555;"></div>
<svg style="left:286px;top:600px;" width="18" height="19" viewBox="0 0 18 19"><path d="M1 9L7.5 2.5l5.5 5.5" fill="none" stroke="#3592C4" stroke-width="2"/><path d="M16.5 4.5v7.5H9z" fill="#3592C4"/><rect x="1" y="15.5" width="15.5" height="2.5" fill="#AFB1B3"/></svg>
<svg style="left:319px;top:600px;" width="18" height="19" viewBox="0 0 18 19"><path d="M9 1v10" stroke="#3592C4" stroke-width="2.2"/><path d="M2.8 6.5L9 13l6.2-6.5z" fill="#3592C4"/><rect x="1.5" y="15.5" width="15" height="2.5" fill="#AFB1B3"/></svg>
<svg style="left:351px;top:600px;" width="18" height="19" viewBox="0 0 18 19"><path d="M11 1v10" stroke="#3592C4" stroke-width="2.2"/><path d="M5 6.5L11 13l6.2-6.5z" fill="#3592C4"/><rect x="1" y="15.5" width="16" height="2.5" fill="#AFB1B3"/><rect x="1" y="2" width="5.5" height="1.3" fill="#AFB1B3"/><rect x="1" y="4.5" width="4" height="1.3" fill="#AFB1B3"/><rect x="1" y="7" width="2.5" height="1.3" fill="#AFB1B3"/></svg>
<svg style="left:384px;top:600px;" width="18" height="19" viewBox="0 0 18 19"><path d="M9 4v10" stroke="#3592C4" stroke-width="2.2"/><path d="M2.8 8.5L9 2l6.2 6.5z" fill="#3592C4"/><rect x="1.5" y="15.5" width="15" height="2.5" fill="#AFB1B3"/></svg>
<svg style="left:416px;top:600px;" width="19" height="19" viewBox="0 0 19 19"><path d="M2 2.5l7.5 7" stroke="#3592C4" stroke-width="2.2"/><path d="M11.5 3.5v8.5H3z" fill="#3592C4"/><path d="M13 9.5h1.5M16 9.5h1.5M15.25 9.5v8M13 17.5h1.5M16 17.5h1.5" stroke="#AFB1B3" stroke-width="1.2" fill="none"/></svg>
<div style="left:445px;top:598px;width:1px;height:24px;background:#555555;"></div>
<svg style="left:458px;top:602px;" width="16" height="16" viewBox="0 0 16 16"><path d="M0 0h16v16H0zM2 2v3.5h12V2zM2 7.2v2.3h3V7.2zM6.5 7.2v2.3h3V7.2zM11 7.2v2.3h3V7.2zM2 11.2v2.8h3v-2.8zM6.5 11.2v2.8h3v-2.8zM11 11.2v2.8h3v-2.8z" fill="#AFB1B3" fill-rule="evenodd"/></svg>
<svg style="left:1871px;top:603px;" width="17" height="13" viewBox="0 0 17 13"><g fill="#AFB1B3"><rect x="0" y="0" width="9.5" height="6"/><rect x="11" y="0" width="5" height="6"/><rect x="0" y="7.5" width="16" height="5.5"/></g></svg>
<svg style="left:1885px;top:619px;" width="7" height="4" viewBox="0 0 7 4"><path d="M0 0h7l-3.5 4z" fill="#AFB1B3"/></svg>
<div style="left:429px;top:628px;width:1px;height:339px;background:#323232;"></div>
<span style="left:79.50px;top:637px;font-size:13.75px;line-height:20px;color:#bbbbbb;letter-spacing:-0.202px;">Frames</span>
<span style="left:445.40px;top:637px;font-size:13.75px;line-height:20px;color:#bbbbbb;letter-spacing:0.032px;">Variables</span>
<div style="left:63px;top:663px;width:1831px;height:1px;background:#323232;"></div>
<svg style="left:76px;top:672px;" width="16" height="16" viewBox="0 0 16 16"><g fill="#9AA7B0"><path d="M0 0h16l-2.5 2h-11z"/><rect x="2.5" y="3.5" width="11" height="2"/><rect x="2.5" y="7" width="11" height="2"/><rect x="2.5" y="10.5" width="11" height="2"/><path d="M2.5 14h11l2.5 2H0z"/></g></svg>
<span style="left:98.50px;top:673px;font-size:16px;line-height:20px;color:#bbbbbb;letter-spacing:0.287px;">MainThread</span>
<svg style="left:405px;top:679px;" width="11" height="6" viewBox="0 0 11 6"><path d="M0 0h11l-5.5 6z" fill="#9da0a2"/></svg>
<div style="left:63px;top:699px;width:366px;height:1px;background:#323232;"></div>
<div style="left:64px;top:700px;width:365px;height:26px;background:#4b6eaf;"></div>
<svg style="left:75px;top:704px;" width="17" height="17" viewBox="0 0 17 17"><path d="M0 0h12v3h-2V2H2v8h1.5v2H0z" fill="#AFB1B3"/><path d="M4.5 4.5H17V17H4.5zM7 7v7.5h7.5V7z" fill="#AFB1B3" fill-rule="evenodd"/></svg>
<span style="left:97.00px;top:703px;font-size:15px;line-height:20px;color:#bbbbbb;letter-spacing:0.870px;">&lt;module&gt;, test.py:19</span>
<span style="left:73.50px;top:945px;font-size:13.75px;line-height:20px;color:#85888a;letter-spacing:0.132px;">Switch frames from anywhere in the IDE with Ctrl+A..</span>
<svg style="left:410px;top:949px;" width="10" height="10" viewBox="0 0 10 10"><path d="M.7 .7l8.6 8.6M9.3 .7L.7 9.3" stroke="#7a7e80" stroke-width="1.1"/></svg>
<div style="left:460px;top:664px;width:1px;height:303px;background:#323232;"></div>
<div style="left:438.5px;top:679px;width:13px;height:2px;background:#AFB1B3;"></div>
<div style="left:444px;top:673.5px;width:2px;height:13px;background:#AFB1B3;"></div>
<div style="left:439px;top:711px;width:13px;height:1.5px;background:#55585a;"></div>
<svg style="left:439px;top:743px;" width="13" height="7" viewBox="0 0 13 7"><path d="M0 7L6.5 0 13 7z" fill="#55585a"/></svg>
<svg style="left:439px;top:770px;" width="13" height="7" viewBox="0 0 13 7"><path d="M0 0L6.5 7 13 0z" fill="#55585a"/></svg>
<svg style="left:437px;top:801px;" width="16" height="17" viewBox="0 0 16 17"><path d="M1 1h9v2.5M1 1v11h3" fill="none" stroke="#55585a" stroke-width="2"/><rect x="5" y="5" width="10" height="11" fill="none" stroke="#55585a" stroke-width="2"/></svg>
<svg style="left:437px;top:836px;" width="20" height="19" viewBox="0 0 20 19"><path d="M1 8C3 4 5.5 2.2 8 2.2S13 4 15 8C13 12 10.5 13.8 8 13.8S3 12 1 8z" fill="none" stroke="#AFB1B3" stroke-width="1.7"/><circle cx="8" cy="8" r="2.8" fill="#AFB1B3"/><path d="M11.5 14.5h7.5l-3.750 4z" fill="#AFB1B3"/></svg>
<div style="left:461px;top:664px;width:1433px;height:35px;background:#45494a;"></div>
<div style="left:461px;top:699px;width:1433px;height:1px;background:#323232;"></div>
<span style="left:471.00px;top:672px;font-size:16px;line-height:20px;color:#787878;font-family:'Liberation Mono', monospace;letter-spacing:-0.600px;">Evaluate expression (Enter) or add a watch (Ctrl+Shift+Enter)</span>
<svg style="left:1837px;top:675px;" width="18" height="17" viewBox="0 0 18 17"><path d="M6.5 0v13M0 6.5h13" stroke="#5f6365" stroke-width="2"/><circle cx="9.5" cy="14" r="2" fill="none" stroke="#5f6365" stroke-width="1"/><circle cx="14.5" cy="14" r="2" fill="none" stroke="#5f6365" stroke-width="1"/></svg>
<svg style="left:1870px;top:679px;" width="12" height="7" viewBox="0 0 12 7"><path d="M0 0h11.5l-5.75 6.5z" fill="#9da0a2"/></svg>
<div style="left:493.25px;top:705px;width:15.5px;height:15.5px;background:#3d8ba6;"></div>
<span style="left:495.60px;top:703px;font-size:9.5px;line-height:20px;color:#24434f;font-weight:700;letter-spacing:0.111px;">01</span>
<span style="left:514.60px;top:702px;font-size:15px;line-height:20px;color:#f97f7a;letter-spacing:1.090px;">age</span>
<span style="left:546.50px;top:702px;font-size:15px;line-height:20px;color:#bbbbbb;letter-spacing:1.334px;">=</span>
<span style="left:560.90px;top:702px;font-size:15px;line-height:20px;color:#8c8c8c;letter-spacing:0.725px;">{int}</span>
<span style="left:594.60px;top:702px;font-size:15px;line-height:20px;color:#bbbbbb;letter-spacing:0.806px;">18</span>
<div style="left:493.25px;top:730px;width:15.5px;height:15.5px;background:#3d8ba6;"></div>
<span style="left:495.60px;top:729px;font-size:9.5px;line-height:20px;color:#24434f;font-weight:700;letter-spacing:0.111px;">01</span>
<span style="left:514.60px;top:727px;font-size:15px;line-height:20px;color:#5394ec;letter-spacing:1.073px;">high</span>
<span style="left:551.50px;top:727px;font-size:15px;line-height:20px;color:#bbbbbb;letter-spacing:1.334px;">=</span>
<span style="left:565.90px;top:727px;font-size:15px;line-height:20px;color:#8c8c8c;letter-spacing:0.782px;">{float}</span>
<span style="left:613.40px;top:727px;font-size:15px;line-height:20px;color:#bbbbbb;letter-spacing:0.374px;">1.75</span>
<div style="left:493.25px;top:755px;width:15.5px;height:15.5px;background:#3d8ba6;"></div>
<span style="left:495.60px;top:753px;font-size:9.5px;line-height:20px;color:#24434f;font-weight:700;letter-spacing:0.111px;">01</span>
<span style="left:514.60px;top:752px;font-size:15px;line-height:20px;color:#f97f7a;letter-spacing:0.817px;">name</span>
<span style="left:559.60px;top:752px;font-size:15px;line-height:20px;color:#bbbbbb;letter-spacing:1.134px;">=</span>
<span style="left:573.75px;top:752px;font-size:15px;line-height:20px;color:#8c8c8c;letter-spacing:0.613px;">{str}</span>
<span style="left:607.80px;top:752px;font-size:15px;line-height:20px;color:#bbbbbb;letter-spacing:-0.375px;">'</span>
<span style="left:642.30px;top:752px;font-size:15px;line-height:20px;color:#bbbbbb;letter-spacing:-0.475px;">'</span>
<div style="left:493.25px;top:780px;width:15.5px;height:15.5px;background:#3d8ba6;"></div>
<span style="left:495.60px;top:779px;font-size:9.5px;line-height:20px;color:#24434f;font-weight:700;letter-spacing:0.111px;">01</span>
<span style="left:514.60px;top:777px;font-size:15px;line-height:20px;color:#f97f7a;letter-spacing:0.685px;">sex</span>
<span style="left:543.75px;top:777px;font-size:15px;line-height:20px;color:#bbbbbb;letter-spacing:1.234px;">=</span>
<span style="left:558.40px;top:777px;font-size:15px;line-height:20px;color:#8c8c8c;letter-spacing:1.018px;">{bool}</span>
<span style="left:606.50px;top:777px;font-size:15px;line-height:20px;color:#bbbbbb;letter-spacing:0.738px;">True</span>
<span style="left:514.60px;top:802px;font-size:15px;line-height:20px;color:#bbbbbb;letter-spacing:0.500px;">Special Variables</span>
<svg style="left:605px;top:748.5px" width="43.4" height="25" viewBox="-6 -19 43.4 25"><text x="0" y="0" font-size="15" fill="#bbbbbb" font-family="'Liberation Sans', 'Noto Sans CJK SC', sans-serif">小明</text></svg>
<svg style="left:471px;top:806px;" width="9" height="12" viewBox="0 0 9 12"><path d="M1.5 1L7 6 1.5 11" fill="none" stroke="#AFB1B3" stroke-width="1.5"/></svg>
<svg style="left:493.25px;top:805.5px;" width="15.5" height="15.5" viewBox="0 0 15.5 15.5"><rect x="0" y="0" width="7" height="7" fill="#3d8ba6"/><rect x="8.5" y="0" width="7" height="7" fill="#9AA7B0"/><rect x="0" y="8.5" width="7" height="7" fill="#9AA7B0"/><rect x="8.5" y="8.5" width="7" height="7" fill="#3d8ba6"/></svg>
<div style="left:0px;top:966px;width:1920px;height:1px;background:#323232;"></div>
<div style="left:241px;top:967px;width:88px;height:27px;background:#2d2f30;"></div>
<div style="left:0px;top:994px;width:1920px;height:1px;background:#323232;"></div>
<svg style="left:43px;top:975px;" width="11" height="15" viewBox="0 0 11 15"><g fill="none" stroke="#AFB1B3" stroke-width="2"><path d="M2.5 3.5v9M2.5 10.5c0-3 5.5-1.5 5.5-5.5"/></g><g fill="#AFB1B3"><circle cx="2.5" cy="2.5" r="2.3"/><circle cx="2.5" cy="12.5" r="2.3"/><circle cx="8" cy="4" r="2.3"/></g></svg>
<span style="left:62.00px;top:974px;font-size:13.75px;line-height:20px;color:#bbbbbb;letter-spacing:0.266px;">Version Control</span>
<svg style="left:187px;top:975px;" width="11" height="13" viewBox="0 0 11 13"><path d="M0 0l10.5 6.5L0 13z" fill="#AFB1B3"/></svg>
<span style="left:205.25px;top:974px;font-size:13.75px;line-height:20px;color:#bbbbbb;letter-spacing:0.005px;">Run</span>
<svg style="left:254px;top:973px;" width="17" height="17" viewBox="0 0 16 16"><g fill="#AFB1B3"><path d="M8 3.4c2.6 0 4 1.7 4 4.3v2.5c0 2.8-1.6 5-4 5s-4-2.2-4-5V7.7c0-2.6 1.4-4.3 4-4.3z"/><path d="M5.3 1.5l1.1-.8L8 2.9 9.6.7l1.1.8-1.9 2.7H7.2z"/></g><g stroke="#AFB1B3" stroke-width="1.9" fill="none"><path d="M4.8 7.4L2.3 5.5M11.2 7.4l2.5-1.9M4.2 9.9H1.5M11.8 9.9h2.7M4.8 12.3l-2.3 1.8M11.2 12.3l2.3 1.8"/></g><g fill="#AFB1B3"><rect x="5.3" y="7.3" width="5.4" height="1.3"/><rect x="5.3" y="10.1" width="5.4" height="1.3"/></g><circle cx="13.3" cy="13.3" r="3" fill="#2d2f30"/><circle cx="13.3" cy="13.3" r="2" fill="#00E000"/></svg>
<span style="left:274.50px;top:974px;font-size:13.75px;line-height:20px;color:#ffffff;letter-spacing:0.294px;">Debug</span>
<svg style="left:343px;top:976px;" width="14" height="11" viewBox="0 0 14 11"><g fill="#AFB1B3"><rect x="0" y="0" width="2.5" height="2.5"/><rect x="4" y="0" width="9.5" height="2.5"/><rect x="0" y="4.2" width="2.5" height="2.5"/><rect x="4" y="4.2" width="9.5" height="2.5"/><rect x="0" y="8.4" width="2.5" height="2.5"/><rect x="4" y="8.4" width="9.5" height="2.5"/></g></svg>
<span style="left:362.00px;top:974px;font-size:13.75px;line-height:20px;color:#bbbbbb;letter-spacing:0.379px;">TODO</span>
<svg style="left:428px;top:974.5px;" width="13" height="13" viewBox="0 0 13 13"><circle cx="6.5" cy="6.5" r="6.5" fill="#AFB1B3"/><rect x="5.5" y="2.5" width="2" height="5" fill="#3c3f41"/><rect x="5.5" y="8.7" width="2" height="2" fill="#3c3f41"/></svg>
<span style="left:447.25px;top:974px;font-size:13.75px;line-height:20px;color:#bbbbbb;letter-spacing:0.084px;">Problems</span>
<svg style="left:531.5px;top:974.5px;" width="15" height="13" viewBox="0 0 15 13"><rect x="0" y="0" width="15" height="13" fill="#AFB1B3"/><path d="M2.5 3.5l3 2.8-3 2.8" fill="none" stroke="#3c3f41" stroke-width="1.5"/><rect x="7" y="9" width="5" height="1.5" fill="#3c3f41"/></svg>
<span style="left:552.00px;top:974px;font-size:13.75px;line-height:20px;color:#bbbbbb;letter-spacing:0.254px;">Terminal</span>
<svg style="left:632px;top:973px;" width="16" height="16" viewBox="0 0 16 16"><g fill="#AFB1B3"><path d="M8 0l8 3.8-8 3.8L0 3.8z"/><path d="M1.8 6.7L8 9.6l6.2-2.9L16 7.6 8 11.4 0 7.6z"/><path d="M1.8 10.5L8 13.4l6.2-2.9 1.8.9L8 15.2 0 11.4z"/></g></svg>
<span style="left:653.00px;top:974px;font-size:13.75px;line-height:20px;color:#bbbbbb;">Python Packages</span>
<svg style="left:790px;top:973px;" width="16" height="16" viewBox="0 0 16 16"><path d="M7.9 1C5.5 1 5.1 2 5.1 3v1.6h3v.6H3.6C2.3 5.2 1 6.1 1 8.1s1 3 2.3 3h1.4V9.3c0-1.3 1-2.3 2.3-2.3h2.9c1 0 1.9-.8 1.9-1.9V3c0-1-.9-2-3.9-2z" fill="#AFB1B3"/><circle cx="6.4" cy="2.8" r=".65" fill="#1d3a52"/><path d="M8.1 15c2.4 0 2.8-1 2.8-2v-1.6h-3v-.6h4.5c1.3 0 2.6-.9 2.6-2.9s-1-3-2.3-3h-1.4v1.8c0 1.3-1 2.3-2.3 2.3H6.1c-1 0-1.9.8-1.9 1.9V13c0 1 .9 2 3.9 2z" fill="#AFB1B3"/><circle cx="9.6" cy="13.2" r=".65" fill="#6b5310"/></svg>
<span style="left:810.00px;top:974px;font-size:13.75px;line-height:20px;color:#bbbbbb;letter-spacing:0.137px;">Python Console</span>
<div style="left:1799px;top:974px;width:16.5px;height:16.5px;border-radius:50%;background:#f0a732"></div>
<span style="left:1804.00px;top:973px;font-size:11.5px;line-height:20px;color:#3c3f41;font-weight:700;letter-spacing:0.094px;">2</span>
<span style="left:1819.00px;top:974px;font-size:13.75px;line-height:20px;color:#bbbbbb;letter-spacing:0.118px;">Event Log</span>
<svg style="left:7px;top:1000px;" width="16" height="16" viewBox="0 0 16 16"><path d="M3.5 .5h12v12h-12z" fill="none" stroke="#AFB1B3" stroke-width="1"/><path d="M.5 3.5v12h12" fill="none" stroke="#AFB1B3" stroke-width="1"/></svg>
<span style="left:33.50px;top:998px;font-size:15px;line-height:20px;color:#bbbbbb;letter-spacing:0.679px;">License expired: Your PyCharm subscription expired on 2023/12/31.If you don't renew it before 2297/10/15, you will no longer be able to use the product. // Renew License</span>
<div style="left:1292px;top:996px;width:225px;height:24px;overflow:hidden"></div>
<span style="left:1292.50px;top:998px;font-size:15px;line-height:20px;color:#bbbbbb;letter-spacing:0.557px;">Fallback Optio... (10 minutes ago</span>
<div style="left:1517px;top:995px;width:30px;height:25px;background:#3c3f41;"></div>
<span style="left:1557.50px;top:998px;font-size:15px;line-height:20px;color:#bbbbbb;letter-spacing:0.449px;">19:1</span>
<span style="left:1603.00px;top:998px;font-size:15px;line-height:20px;color:#bbbbbb;letter-spacing:-0.293px;">CRLF</span>
<span style="left:1654.00px;top:998px;font-size:15px;line-height:20px;color:#787878;letter-spacing:0.500px;">UTF-8</span>
<span style="left:1712.00px;top:998px;font-size:15px;line-height:20px;color:#bbbbbb;letter-spacing:0.494px;">4 spaces</span>
<span style="left:1789.00px;top:998px;font-size:15px;line-height:20px;color:#bbbbbb;letter-spacing:0.722px;">Python 3.10</span>
<svg style="left:1889px;top:1001px;" width="16" height="15" viewBox="0 0 16 15"><path d="M2 6V3.5a3 3 0 0 1 6 0V4.5H6.5V3.5a1.5 1.5 0 0 0-3 0V6z" fill="#AFB1B3"/><rect x="5" y="6.5" width="11" height="8.5" fill="#AFB1B3"/></svg>
<svg style="left:0;top:0" width="1920" height="1020"><path d="M1678.7 73.8L1661.5 76.3L1663.1 78.6L1207.2 395.2L1207.8 396.0L1668.6 86.6L1670.1 88.9Z" fill="#fa3737"/></svg>
<div style="left:1661px;top:24px;width:36px;height:42px;border:7px solid #fa3737"></div>
<svg style="left:0;top:0" width="1920" height="1020"><path d="M86.6 275.4L99.2 287.3L100.0 284.7L787.4 497.3L787.6 496.5L102.9 275.5L103.8 272.9Z" fill="#fa3737"/></svg>
<div style="left:31px;top:226px;width:73px;height:77px;border:7px solid #fa3737"></div>
<div style="left:442px;top:660px;width:279px;height:170px;border:7px solid #fa3737"></div>
</body></html>
